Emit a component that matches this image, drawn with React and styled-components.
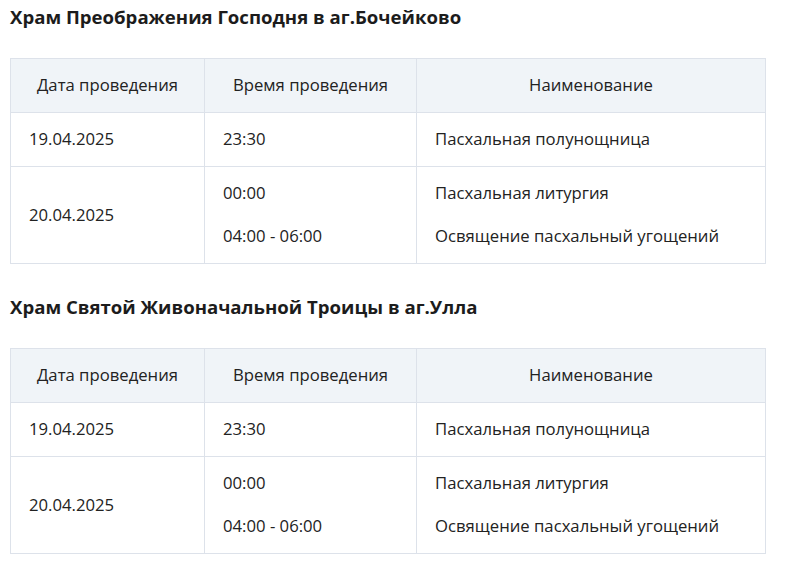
import { styled, createGlobalStyle } from "styled-components";

const GlobalStyle = createGlobalStyle`
  body {
    margin: 0;
    background: #fff;
    font-family: "Open Sans", "Noto Sans", sans-serif;
    color: #222;
  }
`

const schedule = [
  {
    title: "Храм Преображения Господня в аг.Бочейково",
    rows: [
      { date: "19.04.2025", items: [["23:30", "Пасхальная полунощница"]] },
      {
        date: "20.04.2025",
        items: [
          ["00:00", "Пасхальная литургия"],
          ["04:00 - 06:00", "Освящение пасхальный угощений"],
        ],
      },
    ],
  },
  {
    title: "Храм Святой Живоначальной Троицы в аг.Улла",
    rows: [
      { date: "19.04.2025", items: [["23:30", "Пасхальная полунощница"]] },
      {
        date: "20.04.2025",
        items: [
          ["00:00", "Пасхальная литургия"],
          ["04:00 - 06:00", "Освящение пасхальный угощений"],
        ],
      },
    ],
  },
]

function App() {
  return (
    <Page>
      <GlobalStyle />
      {schedule.map((church) => (
        <Section key={church.title}>
          <Title>{church.title}</Title>
          <Table>
            <colgroup>
              <col style={{ width: 194 }} />
              <col style={{ width: 212 }} />
              <col />
            </colgroup>
            <thead>
              <tr>
                <Th>Дата проведения</Th>
                <Th>Время проведения</Th>
                <Th>Наименование</Th>
              </tr>
            </thead>
            <tbody>
              {church.rows.map((row) => (
                <tr key={row.date}>
                  <Td>{row.date}</Td>
                  <Td>
                    {row.items.map(([time]) => (
                      <Line key={time}>{time}</Line>
                    ))}
                  </Td>
                  <Td>
                    {row.items.map(([time, name]) => (
                      <Line key={time}>{name}</Line>
                    ))}
                  </Td>
                </tr>
              ))}
            </tbody>
          </Table>
        </Section>
      ))}
    </Page>
  );
}

const Page = styled.div`
  padding: 5px 10px 0;
`

const Section = styled.section`
  margin-bottom: 31px;
`

const Title = styled.h3`
  margin: 0 0 29px;
  font-size: 18.6px;
  line-height: 24px;
  font-weight: 700;
  color: #1c1c1c;
`

const Table = styled.table`
  width: 756px;
  border-collapse: collapse;
  table-layout: fixed;
  font-size: 16.7px;
  line-height: 25px;
`

const Th = styled.th`
  background: #f0f4f8;
  border: 1px solid #dde2ea;
  padding: 13px 18px 15px;
  font-weight: 400;
  text-align: center;
`

const Td = styled.td`
  border: 1px solid #dde2ea;
  padding: 13px 18px 15px;
  vertical-align: middle;
`

const Line = styled.p`
  margin: 0;
  & + & {
    margin-top: 18px;
  }
`

export default App;
